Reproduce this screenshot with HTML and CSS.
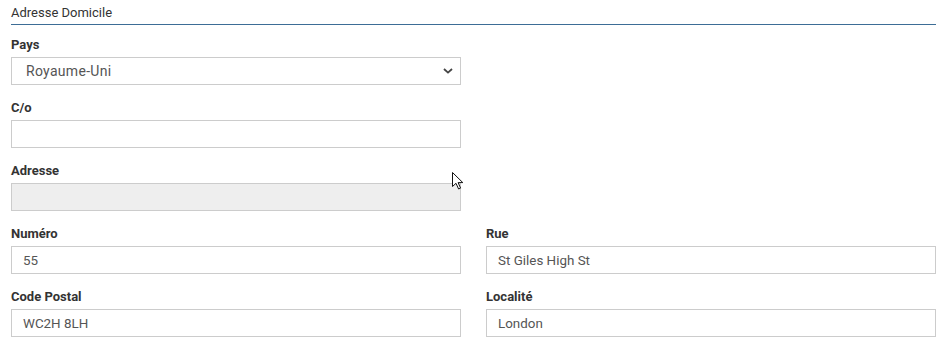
FILE: index.html
```html
<!DOCTYPE html>
<html lang="fr">
<head>
<meta charset="utf-8">
<link rel="stylesheet" href="styles.css">
</head>
<body>
<div class="panel">
  <div class="section-title">Adresse Domicile</div>
  <div class="grid">
    <div class="field">
      <div class="label">Pays</div>
      <div class="control select">
        <span>Royaume-Uni</span>
        <svg class="chev" width="10" height="6" viewBox="0 0 10 6"><path d="M1 1 L5 4.6 L9 1" fill="none" stroke="#444" stroke-width="1.8"/></svg>
      </div>
    </div>
    <div></div>
    <div class="field">
      <div class="label">C/o</div>
      <div class="control"></div>
    </div>
    <div></div>
    <div class="field">
      <div class="label">Adresse</div>
      <div class="control disabled"></div>
    </div>
    <div></div>
    <div class="field">
      <div class="label">Numéro</div>
      <div class="control">55</div>
    </div>
    <div class="field">
      <div class="label">Rue</div>
      <div class="control">St Giles High St</div>
    </div>
    <div class="field">
      <div class="label">Code Postal</div>
      <div class="control">WC2H 8LH</div>
    </div>
    <div class="field">
      <div class="label">Localité</div>
      <div class="control">London</div>
    </div>
  </div>
</div>
<svg class="cursor" width="14" height="20" viewBox="0 0 14 20"><path d="M1.5 1.5 L1.5 15.5 L5 12.3 L7.6 18 L9.6 17.1 L7.1 11.6 L11.8 11.6 Z" fill="#fff" stroke="#111" stroke-width="1" stroke-linejoin="miter"/></svg>
</body>
</html>
```
FILE: styles.css
```css
html, body {
  margin: 0;
  padding: 0;
  background: #fff;
}
body {
  font-family: Roboto, "Liberation Sans", sans-serif;
  color: #333;
  position: relative;
}
.panel {
  padding: 3px 12px 0 11px;
}
.section-title {
  font-size: 13px;
  line-height: 20px;
  padding-bottom: 1px;
  border-bottom: 1px solid #3d6d96;
  color: #333;
}
.grid {
  display: grid;
  grid-template-columns: 450px 450px;
  column-gap: 25px;
  padding-top: 13px;
}
.field {
  display: flex;
  flex-direction: column;
  height: 63px;
}
.label {
  font-size: 13px;
  font-weight: 700;
  line-height: 14px;
  margin-bottom: 5px;
  color: #333;
}
.control {
  box-sizing: border-box;
  height: 28px;
  border: 1px solid #ccc;
  background: #fff;
  font-size: 13.4px;
  color: #555;
  padding: 0 11px;
  display: flex;
  align-items: center;
}
.control.disabled {
  background: #eee;
}
.select {
  font-size: 14px;
  letter-spacing: 0.3px;
  padding-left: 14px;
  padding-right: 7px;
  justify-content: space-between;
}
.chev {
  display: block;
}
.cursor {
  position: absolute;
  left: 451px;
  top: 171px;
}
```
